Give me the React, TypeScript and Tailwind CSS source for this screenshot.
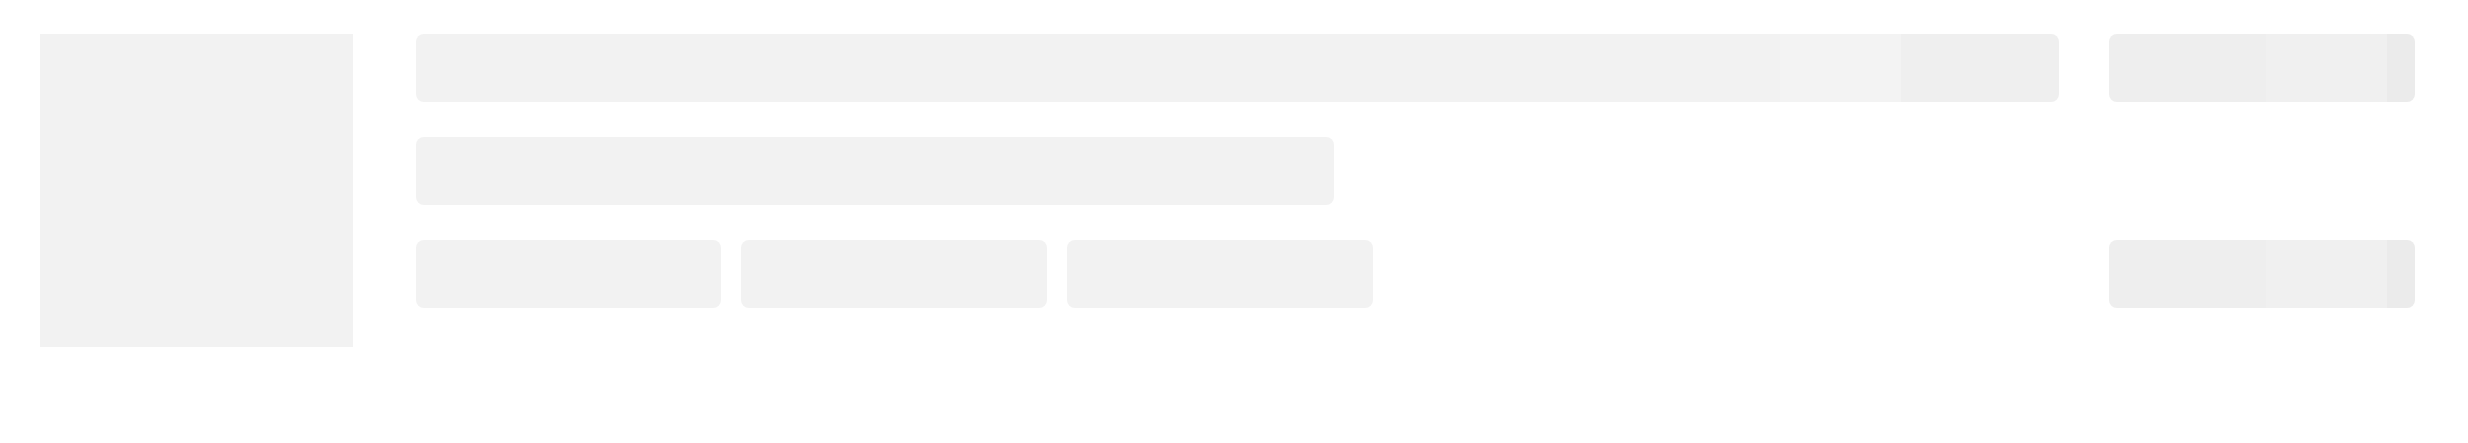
import React from 'react';

// captured shimmer frame: flat base, a slightly lighter band, then the darker tail
const shimmerMain =
  'bg-[linear-gradient(90deg,#f2f2f2_0,#f2f2f2_83%,#f3f3f3_83%,#f3f3f3_90.4%,#efefef_90.4%,#efefef_100%)]';
const shimmerSide =
  'bg-[linear-gradient(90deg,#eeeeee_0,#eeeeee_51.3%,#f0f0f0_51.3%,#f0f0f0_90.8%,#ebebeb_90.8%,#ebebeb_100%)]';

const Bar: React.FC<{ className?: string }> = ({ className = '' }) => (
  <div className={`h-[68px] rounded-lg bg-[#f2f2f2] ${className}`} />
);

export default function App() {
  return (
    <div className="min-h-[443px] w-full bg-white">
      <div className="flex items-start pl-10 pr-[53px] pt-[34px]">
        <div className="h-[313px] w-[313px] shrink-0 bg-[#f2f2f2]" />

        <div className="ml-[63px] flex flex-1 flex-col gap-[35px]">
          <div className="flex gap-[50px]">
            <Bar className={`flex-1 ${shimmerMain}`} />
            <Bar className={`w-[306px] ${shimmerSide}`} />
          </div>

          <div className="flex">
            <Bar className="w-[918px]" />
          </div>

          <div className="flex items-center">
            <div className="flex gap-5">
              <Bar className="w-[305px]" />
              <Bar className="w-[306px]" />
              <Bar className="w-[306px]" />
            </div>
            <div className="flex-1" />
            <Bar className={`w-[306px] ${shimmerSide}`} />
          </div>
        </div>
      </div>
    </div>
  );
}
